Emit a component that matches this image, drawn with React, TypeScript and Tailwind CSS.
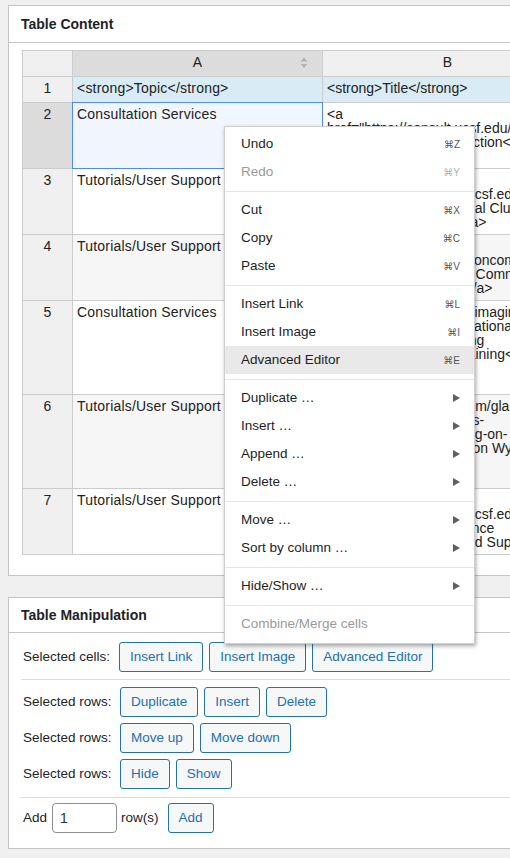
import React from "react";

type Row = { n: number; a: string; b: string[]; h: string; bg: string };

const rows: Row[] = [
  { n: 1, a: "<strong>Topic</strong>", b: ["<strong>Title</strong>"], h: "h-[26px]", bg: "bg-[#d9ebf5]" },
  {
    n: 2,
    a: "Consultation Services",
    b: ["<a", 'href="https://consult.ucsf.edu/">', "Consultation Offices Section</a>"],
    h: "h-[66px]",
    bg: "bg-white",
  },
  {
    n: 3,
    a: "Tutorials/User Support",
    b: ["<a", 'href="https://etutorials.ucsf.edu/club-', '1">Bioinformatics Journal Club', "Sessions Recordings</a>"],
    h: "h-[66px]",
    bg: "bg-white",
  },
  {
    n: 4,
    a: "Tutorials/User Support",
    b: ["<a", 'href="https://it.ucsf.edu/oncommons', '">Research Computing Commons', "Commons Workshops</a>"],
    h: "h-[66px]",
    bg: "bg-[#f6f6f6]",
  },
  {
    n: 5,
    a: "Consultation Services",
    b: [
      '<a href="https://ucsf.co/imaging',
      'core/">Imaging Computational',
      "Analyses and Processing",
      "Lab Workshops and Training</a>",
    ],
    h: "h-[94px]",
    bg: "bg-white",
  },
  {
    n: 6,
    a: "Tutorials/User Support",
    b: [
      '<a href="https://gitee.com/gladstone-',
      "labs-resources/etutorials-",
      "computing-with-ai-coding-on-",
      '">Basics of Computing on Wynton</a>',
    ],
    h: "h-[94px]",
    bg: "bg-[#f6f6f6]",
  },
  {
    n: 7,
    a: "Tutorials/User Support",
    b: ["<a", 'href="https://etutorials.ucsf.edu/', 'cluster">High Performance', "Computing Trainings and Support</a>"],
    h: "h-[66px]",
    bg: "bg-white",
  },
];

type Item = { label: string; key?: string; sub?: boolean; disabled?: boolean; active?: boolean } | "sep";

const menu: Item[] = [
  { label: "Undo", key: "⌘Z" },
  { label: "Redo", key: "⌘Y", disabled: true },
  "sep",
  { label: "Cut", key: "⌘X" },
  { label: "Copy", key: "⌘C" },
  { label: "Paste", key: "⌘V" },
  "sep",
  { label: "Insert Link", key: "⌘L" },
  { label: "Insert Image", key: "⌘I" },
  { label: "Advanced Editor", key: "⌘E", active: true },
  "sep",
  { label: "Duplicate …", sub: true },
  { label: "Insert …", sub: true },
  { label: "Append …", sub: true },
  { label: "Delete …", sub: true },
  "sep",
  { label: "Move …", sub: true },
  { label: "Sort by column …", sub: true },
  "sep",
  { label: "Hide/Show …", sub: true },
  "sep",
  { label: "Combine/Merge cells", disabled: true },
];

const Btn = ({ children }: { children: React.ReactNode }) => (
  <button className="h-[30px] px-[10px] rounded-[3px] border border-[#2271b1] bg-[#f6f7f7] text-[#2271b1] text-[13.5px] leading-none whitespace-nowrap">
    {children}
  </button>
);

const SortIcon = () => (
  <svg width="8" height="12" viewBox="0 0 8 12" className="absolute right-[14px] top-[6px]">
    <path d="M4 0.5 L7.5 4.5 H0.5 Z" fill="#b3b3b3" />
    <path d="M0.5 7 H7.5 L4 11 Z" fill="#b3b3b3" />
  </svg>
);

const Arrow = () => (
  <svg width="7" height="8" viewBox="0 0 7 8">
    <path d="M0 0 L7 4 L0 8 Z" fill="#5f5f5f" />
  </svg>
);

function ContextMenu() {
  return (
    <div className="absolute left-[224px] top-[126px] w-[251px] bg-white border border-[#cfcfcf] shadow-[1px_2px_4px_rgba(0,0,0,0.35)] pt-[3px] pb-[5px] text-[13.5px]">
      {menu.map((item, i) =>
        item === "sep" ? (
          <div key={i} className="mt-[5px] mb-[4px] h-px bg-[#e6e6e6]" />
        ) : (
          <div
            key={i}
            className={`h-[28px] flex items-center justify-between pl-[16px] pr-[14px] ${
              item.active ? "bg-[#e9e9e9]" : ""
            } ${item.disabled ? "text-[#9a9a9a]" : "text-[#1e1e1e]"}`}
          >
            <span>{item.label}</span>
            {item.key && (
              <span className={`text-[10px] ${item.disabled ? "text-[#b0b0b0]" : "text-[#555]"}`}>{item.key}</span>
            )}
            {item.sub && <Arrow />}
          </div>
        )
      )}
    </div>
  );
}

export default function App() {
  return (
    <div className="relative w-[510px] h-[858px] overflow-hidden bg-[#f0f0f1] font-['Liberation_Sans','DejaVu_Sans',sans-serif] text-[#1d2327]">
      <div className="pl-2 pt-[5px]">
        {/* Table Content */}
        <div className="w-[640px] bg-white border border-[#c3c4c7]">
          <div className="h-[37px] flex items-center pl-[12px] border-b border-[#c3c4c7] text-[14px] font-bold">
            Table Content
          </div>
          <div className="pt-[7px] pb-[20px] pl-[13px]">
            <div className="w-max border-l border-t border-[#cccccc] text-[14px] leading-[14px] text-[#222]">
              <div className="flex h-[26px] border-b border-[#cccccc]">
                <div className="w-[50px] border-r border-[#cccccc] bg-[#f0f0f0]" />
                <div className="relative w-[250px] border-r border-[#cccccc] bg-[#dcdcdc] pt-[4px] text-center">
                  A
                  <SortIcon />
                </div>
                <div className="w-[250px] border-r border-[#cccccc] bg-[#f0f0f0] pt-[4px] text-center">B</div>
              </div>
              {rows.map((r) => (
                <div key={r.n} className={`flex ${r.h} border-b border-[#cccccc]`}>
                  <div
                    className={`w-[50px] border-r border-[#cccccc] pt-[4px] text-center ${
                      r.n === 2 ? "bg-[#dcdcdc]" : "bg-[#f0f0f0]"
                    }`}
                  >
                    {r.n}
                  </div>
                  <div
                    className={`relative w-[250px] border-r border-[#cccccc] pt-[4px] px-[4px] whitespace-nowrap tracking-[0.2px] ${
                      r.n === 2 ? "bg-[#f1f5fe]" : r.bg
                    }`}
                  >
                    {r.a}
                    {r.n === 2 && (
                      <div className="absolute -left-px -top-px -right-px -bottom-px border border-[#4b89ff]" />
                    )}
                  </div>
                  <div className={`w-[250px] border-r border-[#cccccc] pt-[4px] px-[4px] overflow-hidden ${r.bg}`}>
                    {r.b.map((line, i) => (
                      <div key={i} className="whitespace-nowrap">
                        {line}
                      </div>
                    ))}
                  </div>
                </div>
              ))}
            </div>
          </div>
        </div>

        {/* Table Manipulation */}
        <div className="mt-[21px] w-[640px] bg-white border border-[#c3c4c7]">
          <div className="h-[35px] flex items-center pl-[12px] border-b border-[#c3c4c7] text-[14px] font-bold">
            Table Manipulation
          </div>
          <div className="px-3 pt-[9px] pb-[15px] text-[13.5px]">
            <div className="flex items-center pl-[2px]">
              <span className="w-[96px]">Selected cells:</span>
              <div className="flex gap-[6px]">
                <Btn>Insert Link</Btn>
                <Btn>Insert Image</Btn>
                <Btn>Advanced Editor</Btn>
              </div>
            </div>
            <div className="mt-[7px] mb-[7px] h-px bg-[#dcdcde]" />
            <div className="flex flex-col gap-[6px]">
              <div className="flex items-center pl-[2px]">
                <span className="w-[97px]">Selected rows:</span>
                <div className="flex gap-[6px]">
                  <Btn>Duplicate</Btn>
                  <Btn>Insert</Btn>
                  <Btn>Delete</Btn>
                </div>
              </div>
              <div className="flex items-center pl-[2px]">
                <span className="w-[97px]">Selected rows:</span>
                <div className="flex gap-[6px]">
                  <Btn>Move up</Btn>
                  <Btn>Move down</Btn>
                </div>
              </div>
              <div className="flex items-center pl-[2px]">
                <span className="w-[97px]">Selected rows:</span>
                <div className="flex gap-[6px]">
                  <Btn>Hide</Btn>
                  <Btn>Show</Btn>
                </div>
              </div>
            </div>
            <div className="mt-[8px] mb-[5px] h-px bg-[#dcdcde]" />
            <div className="flex items-center pl-[2px]">
              <span>Add</span>
              <input
                readOnly
                value="1"
                className="ml-[5px] w-[65px] h-[30px] rounded-[4px] border border-[#8c8f94] pl-[7px] text-[14px] text-[#2c3338] bg-white"
              />
              <span className="ml-[4px]">row(s)</span>
              <div className="ml-[9px]">
                <Btn>Add</Btn>
              </div>
            </div>
          </div>
        </div>
      </div>
      <ContextMenu />
    </div>
  );
}
